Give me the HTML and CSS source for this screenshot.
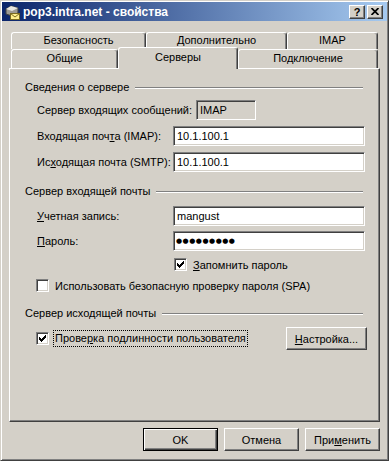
FILE: index.html
```html
<!DOCTYPE html>
<html lang="ru">
<head>
    <meta charset="UTF-8">
    <title>pop3.intra.net - свойства</title>
    <link rel="stylesheet" href="styles.css">
</head>
<body>
<div class="window">
    <div class="titlebar">
        <svg class="app-icon" width="16" height="16" viewBox="0 0 16 16">
            <path d="M2 5 L7 2 L14 4 L14 9 L8 12 L2 10 Z" fill="#9c9a94" stroke="#404040" stroke-width="1"/>
            <path d="M2 5 L7 2 L14 4 L8 7 Z" fill="#e8e6e0"/>
            <rect x="6.5" y="9.5" width="9" height="6" fill="#ffef8c" stroke="#7a6a20"/>
            <path d="M6.5 9.5 L11 13 L15.5 9.5" fill="none" stroke="#7a6a20"/>
        </svg>
        <span class="title">pop3.intra.net - свойства</span>
        <div class="caption-buttons">
            <button class="caption-btn">?</button>
            <button class="caption-btn">
                <svg width="8" height="7" viewBox="0 0 8 7"><path d="M0.5 0 L7.5 7 M7.5 0 L0.5 7" stroke="#000" stroke-width="1.7"/></svg>
            </button>
        </div>
    </div>

    <div class="dialog">
        <div class="tabs">
            <div class="tab-row back">
                <div class="tab" style="width:135px">Безопасность</div>
                <div class="tab" style="width:141px">Дополнительно</div>
                <div class="tab" style="width:91px">IMAP</div>
            </div>
            <div class="tab-row front">
                <div class="tab" style="width:107px">Общие</div>
                <div class="tab selected" style="width:120px">Серверы</div>
                <div class="tab" style="width:140px">Подключение</div>
            </div>
        </div>

        <div class="panel">
            <div class="group-title"><span>Сведения о сервере</span><i class="rule"></i></div>
            <div class="row">
                <label class="wide">Сервер вхо<u>д</u>ящих сообщений:</label>
                <input class="field readonly" type="text" value="IMAP" readonly>
            </div>
            <div class="row">
                <label>Входящая поч<u>т</u>а (IMAP):</label>
                <input class="field" type="text" value="10.1.100.1">
            </div>
            <div class="row">
                <label>Ис<u>х</u>одящая почта (SMTP):</label>
                <input class="field" type="text" value="10.1.100.1">
            </div>

            <div class="group-title second"><span>Сервер входящей почты</span><i class="rule"></i></div>
            <div class="row account">
                <label><u>У</u>четная запись:</label>
                <input class="field" type="text" value="mangust">
            </div>
            <div class="row password">
                <label><u>П</u>ароль:</label>
                <div class="field"><span class="dots">●●●●●●●●●</span></div>
            </div>
            <div class="check-row remember">
                <span class="checkbox"><svg width="7" height="7" viewBox="0 0 7 7" shape-rendering="crispEdges"><path d="M0 2H1V3H2V4H3V3H4V2H5V1H6V0H7V3H6V4H5V5H4V6H3V7H2V6H1V5H0Z"/></svg></span>
                <span class="check-label"><u>З</u>апомнить пароль</span>
            </div>
            <div class="check-row spa">
                <span class="checkbox"></span>
                <span class="check-label">Использовать безопасную проверку пароля (SPA)</span>
            </div>

            <div class="group-title third"><span>Сервер исходящей почты</span><i class="rule"></i></div>
            <div class="check-row auth">
                <span class="checkbox"><svg width="7" height="7" viewBox="0 0 7 7" shape-rendering="crispEdges"><path d="M0 2H1V3H2V4H3V3H4V2H5V1H6V0H7V3H6V4H5V5H4V6H3V7H2V6H1V5H0Z"/></svg></span>
                <span class="check-label focused">Прове<u>р</u>ка подлинности пользователя</span>
                <button class="btn settings"><u>Н</u>астройка...</button>
            </div>
        </div>

        <div class="actions">
            <button class="btn default">OK</button>
            <button class="btn">Отмена</button>
            <button class="btn">При<u>м</u>енить</button>
        </div>
    </div>
</div>
</body>
</html>
```

FILE: styles.css
```css
* {
    margin: 0;
    padding: 0;
    box-sizing: border-box;
}

body {
    background-color: #d4d0c8;
    font-family: "Liberation Sans", Arial, sans-serif;
    font-size: 11px;
    color: #000;
}

.window {
    width: 389px;
    height: 461px;
    border: 1px solid;
    border-color: #d4d0c8 #404040 #404040 #d4d0c8;
    padding: 1px;
    box-shadow: inset 1px 1px #fff, inset -1px -1px #808080;
    background-color: #d4d0c8;
    display: flex;
    flex-direction: column;
}

/* title bar */
.titlebar {
    height: 19px;
    display: flex;
    align-items: center;
    padding: 0 4px 0 2px;
    background: linear-gradient(to right, #0a246a, #a6caf0);
    color: #fff;
}

.app-icon {
    flex: none;
}

.title {
    margin-left: 3px;
    font-weight: bold;
    font-size: 12px;
}

.caption-buttons {
    margin-left: auto;
    display: flex;
    gap: 2px;
}

.caption-btn {
    width: 16px;
    height: 14px;
    border: 1px solid;
    border-color: #fff #404040 #404040 #fff;
    box-shadow: inset -1px -1px #808080;
    background-color: #d4d0c8;
    font: bold 11px "Liberation Sans", Arial, sans-serif;
    color: #000;
    display: flex;
    align-items: center;
    justify-content: center;
    line-height: 12px;
}

/* dialog body */
.dialog {
    flex: 1;
    padding: 11px 7px 0 7px;
    display: flex;
    flex-direction: column;
}

.tab-row {
    display: flex;
    padding-left: 2px;
}

.tab-row.back {
    height: 17px;
}

.tab-row.front {
    height: 19px;
}

.tab {
    height: 100%;
    border: 1px solid;
    border-bottom: none;
    border-color: #fff #404040 #404040 #fff;
    border-radius: 3px 3px 0 0;
    box-shadow: inset -1px 0 #808080;
    background-color: #d4d0c8;
    text-align: center;
    line-height: 15px;
}

.tab-row.front .tab {
    line-height: 17px;
}

.tab-row.front .tab.selected {
    position: relative;
    z-index: 1;
    height: 22px;
    margin-top: -2px;
    line-height: 18px;
}

.panel {
    height: 354px;
    border: 1px solid;
    border-color: #fff #404040 #404040 #fff;
    box-shadow: inset -1px -1px #808080;
    padding: 12px 13px 0 15px;
}

.group-title {
    display: flex;
    align-items: center;
    height: 13px;
    line-height: 13px;
}

.group-title.second {
    margin-top: 13px;
}

.group-title.third {
    margin-top: 15px;
}

.rule {
    flex: 1;
    height: 2px;
    border-top: 1px solid #808080;
    border-bottom: 1px solid #fff;
    margin: 0 3px 0 6px;
}

.row {
    display: flex;
    align-items: center;
    height: 20px;
    margin-top: 6px;
    padding-left: 12px;
}

.row label {
    width: 136px;
}

.row label.wide {
    width: 159px;
}

.row.account {
    margin-top: 8px;
}

.row.password {
    margin-top: 5px;
}

.field {
    width: 192px;
    height: 20px;
    border: 1px solid;
    border-color: #808080 #fff #fff #808080;
    box-shadow: inset 1px 1px #404040, inset -1px -1px #d4d0c8;
    background-color: #fff;
    font: inherit;
    color: #000;
    padding: 0 3px;
    outline: none;
    display: flex;
    align-items: center;
}

.field.readonly {
    width: 60px;
    background-color: #d4d0c8;
}

.dots {
    font-family: "DejaVu Sans", sans-serif;
    font-size: 7px;
    letter-spacing: 0.5px;
    margin-left: -1px;
}

.check-row {
    display: flex;
    align-items: center;
    height: 13px;
}

.check-row.remember {
    margin-top: 7px;
    padding-left: 149px;
}

.check-row.spa {
    margin-top: 8px;
    padding-left: 11px;
}

.check-row.auth {
    margin-top: 7px;
    padding-left: 11px;
    height: 23px;
}

.checkbox {
    flex: none;
    width: 13px;
    height: 13px;
    border: 1px solid;
    border-color: #808080 #fff #fff #808080;
    box-shadow: inset 1px 1px #404040, inset -1px -1px #d4d0c8;
    background-color: #fff;
    display: flex;
    align-items: center;
    justify-content: center;
}

.check-label {
    margin-left: 6px;
}

.check-label.focused {
    margin-left: 4px;
    padding: 1px;
    border: 1px dotted #000;
    line-height: 13px;
}

.btn {
    width: 75px;
    height: 23px;
    border: 1px solid;
    border-color: #fff #404040 #404040 #fff;
    box-shadow: inset -1px -1px #808080;
    background-color: #d4d0c8;
    font: inherit;
    color: #000;
}

.btn.default {
    border-color: #000;
    box-shadow: inset 1px 1px #fff, inset -1px -1px #404040, inset -2px -2px #808080;
}

.btn.settings {
    width: 81px;
    margin-left: auto;
    margin-right: -1px;
}

.actions {
    display: flex;
    justify-content: flex-end;
    gap: 6px;
    margin-top: 6px;
}
```
